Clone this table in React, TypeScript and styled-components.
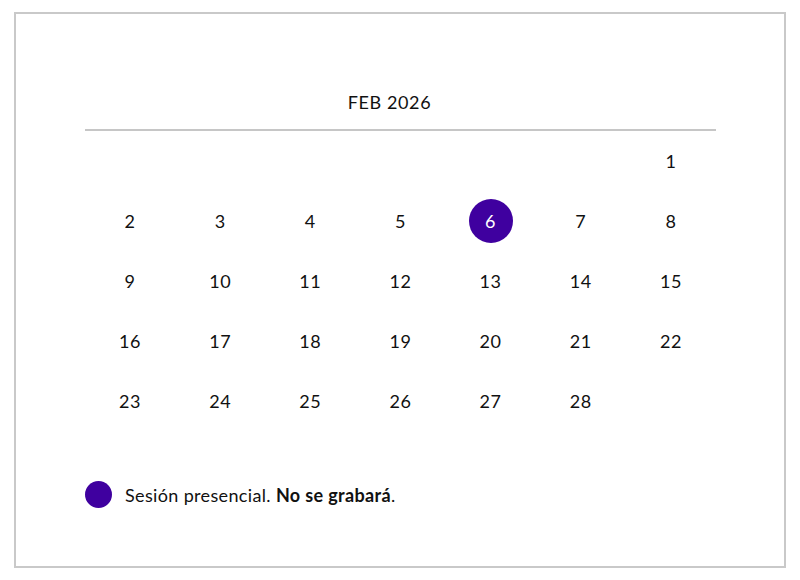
import React from "react";
import styled, { createGlobalStyle } from "styled-components";

const Global = createGlobalStyle`
  html, body { margin: 0; padding: 0; background: #fff; }
  body { font-family: Lato, "Open Sans", sans-serif; color: #111; letter-spacing: 0.6px; }
`;

const Card = styled.div`
  box-sizing: border-box;
  margin: 12px 0 0 14px;
  width: 772px;
  height: 556px;
  border: 2px solid #c9c9c9;
  padding: 76px 68px 0 69px;
  display: flex;
  flex-direction: column;
`;

const Header = styled.div`
  font-size: 18px;
  line-height: 24px;
  text-align: center;
  padding: 0 22px 15px 0;
  border-bottom: 2px solid #c6c6c6;
`;

const Grid = styled.div`
  display: grid;
  grid-template-columns: repeat(7, 1fr);
  grid-auto-rows: 60px;
`;

const Cell = styled.div`
  display: flex;
  align-items: center;
  justify-content: center;
  font-size: 18px;
`;

const Day = styled.span<{ $active?: boolean }>`
  width: 44px;
  height: 44px;
  border-radius: 50%;
  display: flex;
  align-items: center;
  justify-content: center;
  background: ${(p) => (p.$active ? "#3f009f" : "transparent")};
  color: ${(p) => (p.$active ? "#fff" : "#111")};
`;

const Legend = styled.div`
  margin-top: 50px;
  display: flex;
  align-items: center;
  gap: 13px;
  font-size: 18px;
  letter-spacing: 0.35px;
`;

const Dot = styled.span`
  width: 27px;
  height: 27px;
  border-radius: 50%;
  background: #3f009f;
  flex: none;
`;

export default function App() {
  const cells: (number | null)[] = [null, null, null, null, null, null];
  for (let d = 1; d <= 28; d++) cells.push(d);
  return (
    <>
      <Global />
      <Card>
        <Header>FEB 2026</Header>
        <Grid>
          {cells.map((d, i) => (
            <Cell key={i}>{d !== null && <Day $active={d === 6}>{d}</Day>}</Cell>
          ))}
        </Grid>
        <Legend>
          <Dot />
          <span>
            Sesión presencial. <b>No se grabará</b>.
          </span>
        </Legend>
      </Card>
    </>
  );
}
